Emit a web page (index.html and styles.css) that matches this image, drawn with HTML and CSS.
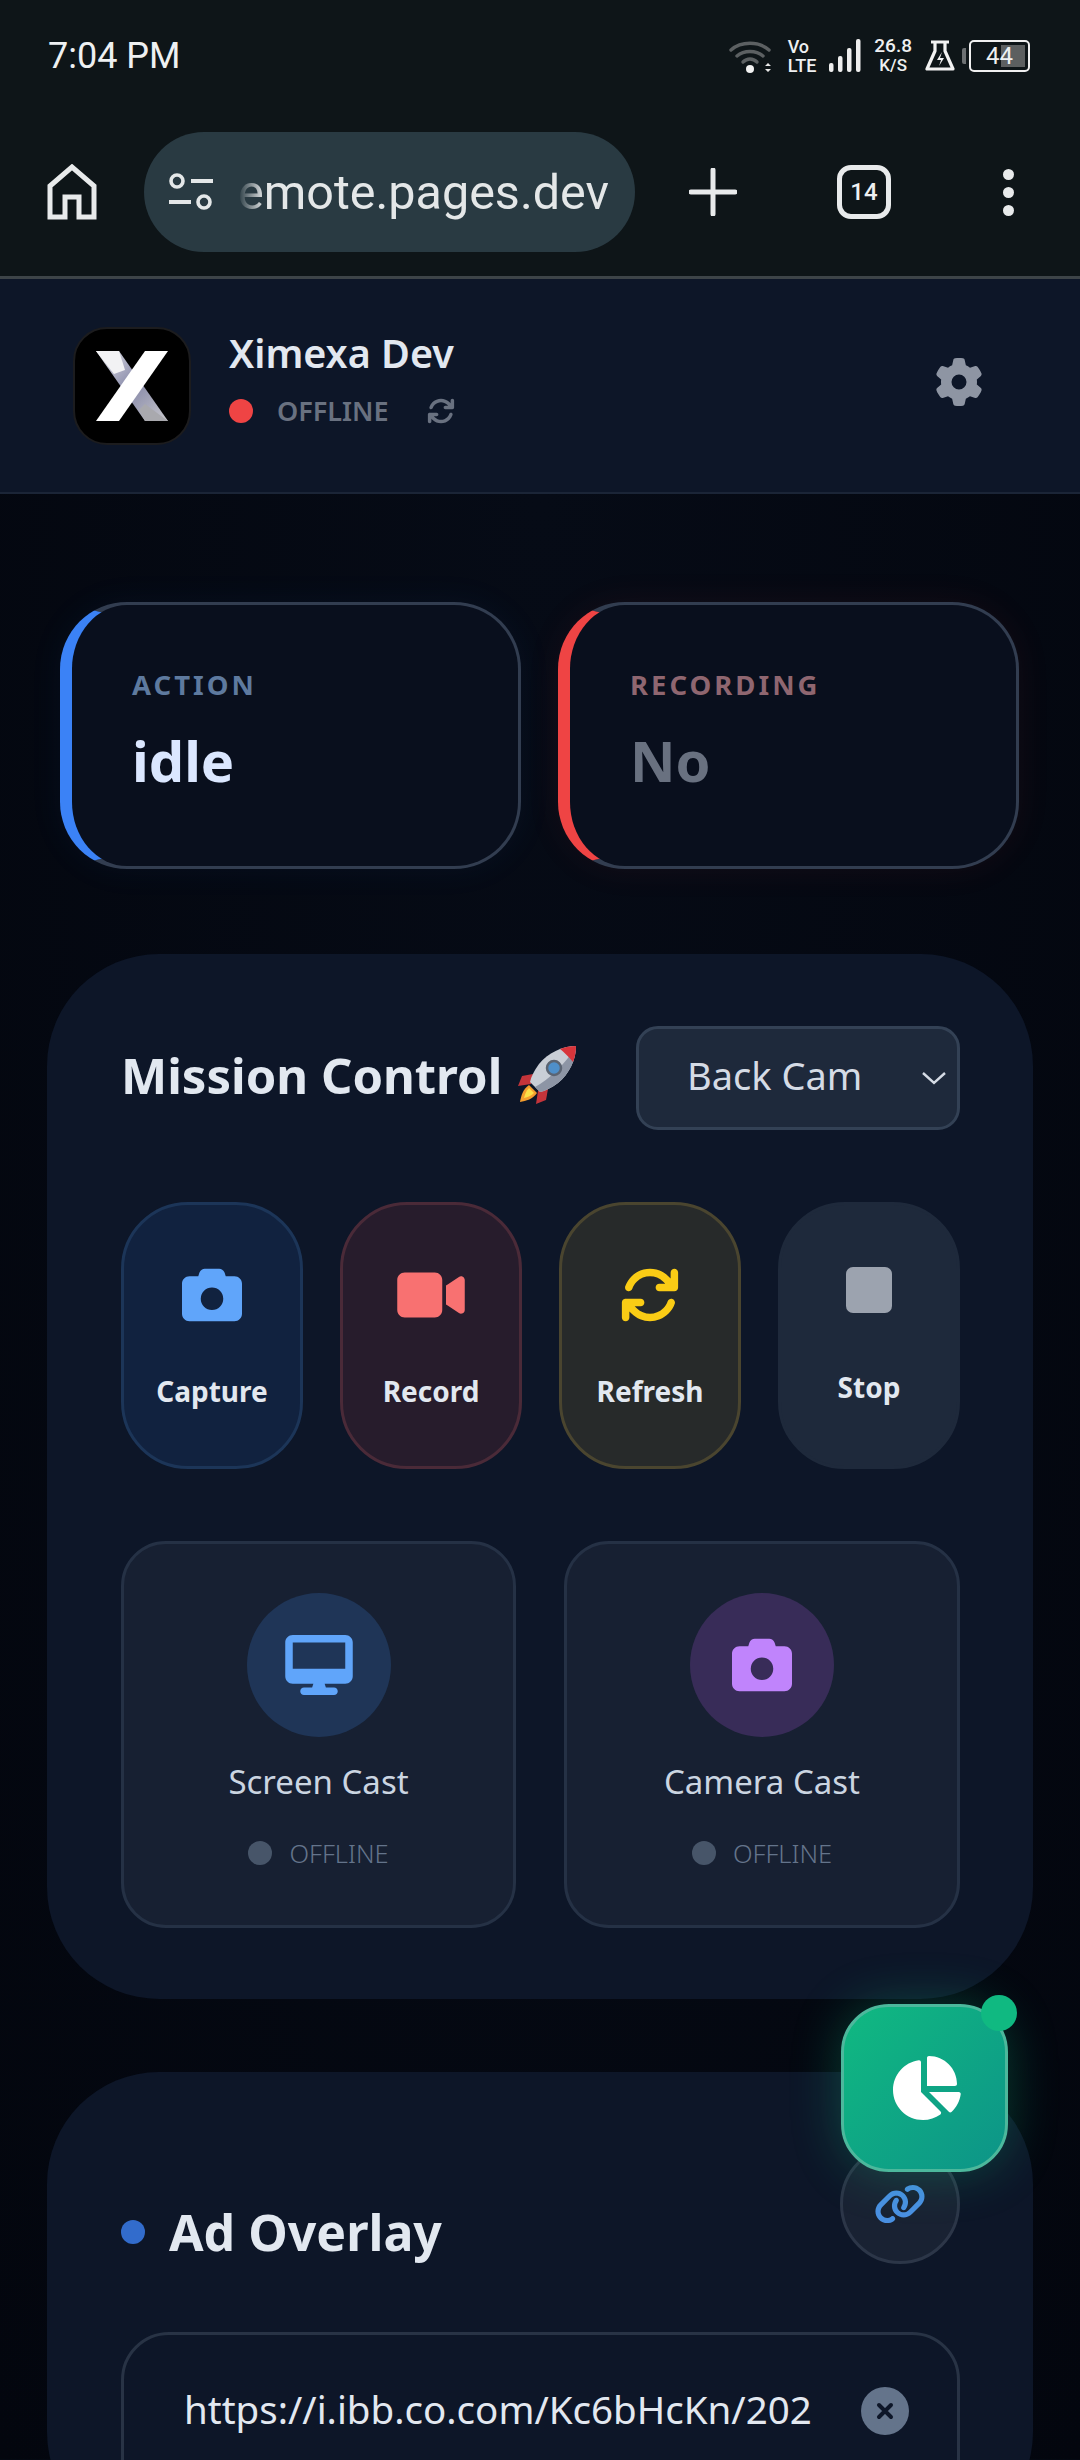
FILE: index.html
```html
<!DOCTYPE html>
<html lang="en">
<head>
    <meta charset="UTF-8">
    <meta name="viewport" content="width=device-width, initial-scale=1.0">
    <title>Ximexa Remote</title>
    <link rel="stylesheet" href="styles.css">
</head>
<body>

    <svg class="icon-defs" width="0" height="0">
        <symbol id="i-camera" viewBox="0 0 512 512"><path fill="currentColor" d="M149.1 64.8L138.7 96H64C28.7 96 0 124.7 0 160V416c0 35.3 28.7 64 64 64H448c35.3 0 64-28.7 64-64V160c0-35.3-28.7-64-64-64H373.3L362.9 64.8C356.4 45.2 338.1 32 317.4 32H194.6c-20.7 0-39 13.2-45.5 32.8zM256 192a96 96 0 1 1 0 192 96 96 0 1 1 0-192z"/></symbol>
        <symbol id="i-sync" viewBox="0 0 512 512"><path fill="currentColor" d="M105.1 202.6c7.7-21.8 20.2-42.3 37.8-59.8c62.5-62.5 163.8-62.5 226.3 0L386.3 160H336c-17.7 0-32 14.3-32 32s14.3 32 32 32H463.5c0 0 0 0 0 0h.4c17.7 0 32-14.3 32-32V64c0-17.7-14.3-32-32-32s-32 14.3-32 32v51.2L414.4 97.6c-87.5-87.5-229.3-87.5-316.8 0C73.2 122 55.6 150.7 44.8 181.4c-5.9 16.7 2.9 34.9 19.5 40.8s34.9-2.9 40.8-19.5zM39 289.3c-5 1.5-9.8 4.2-13.7 8.2c-4 4-6.7 8.8-8.1 14c-.3 1.2-.6 2.5-.8 3.8c-.3 1.7-.4 3.4-.4 5.1V448c0 17.7 14.3 32 32 32s32-14.3 32-32V396.9l17.6 17.5 0 0c87.5 87.4 229.3 87.4 316.7 0c24.4-24.4 42.1-53.1 52.9-83.7c5.9-16.7-2.9-34.9-19.5-40.8s-34.9 2.9-40.8 19.5c-7.7 21.8-20.2 42.3-37.8 59.8c-62.5 62.5-163.8 62.5-226.3 0l-.1-.1L125.6 352H176c17.7 0 32-14.3 32-32s-14.3-32-32-32H48.4c-1.6 0-3.2 .1-4.8 .3s-3.1 .5-4.6 1z"/></symbol>
    </svg>

    <div class="chrome">
        <div class="status-bar">
            <span class="clock">7:04 PM</span>
            <div class="status-icons">
                <svg class="wifi" width="46" height="36" viewBox="0 0 46 36">
                    <g fill="none" stroke="#5c6062" stroke-width="3.4" stroke-linecap="round">
                        <path d="M2 12C12 3 30 3 40 12"/>
                        <path d="M8 18C15 12 27 12 34 18"/>
                        <path d="M14 24C18 20 24 20 28 24"/>
                    </g>
                    <circle cx="21" cy="31" r="4" fill="#f2f2f2"/>
                    <path d="M36 28l3-3 3 3zM36 31l3 3 3-3z" fill="#e8e8e8"/>
                </svg>
                <span class="net-type">Vo<br>LTE</span>
                <svg class="signal" width="32" height="33" viewBox="0 0 32 33">
                    <g fill="#eeeeee">
                        <rect x="0" y="24" width="4.5" height="9" rx="2"/>
                        <rect x="9" y="17" width="4.5" height="16" rx="2"/>
                        <rect x="18" y="9" width="4.5" height="24" rx="2"/>
                        <rect x="27" y="0" width="4.5" height="33" rx="2"/>
                    </g>
                </svg>
                <span class="net-speed">26.8<br><small>K/S</small></span>
                <svg class="flask" width="30" height="31" viewBox="0 0 30 31">
                    <path d="M6 2H24M10 2V11L2 29H28L20 11V2" fill="none" stroke="#f2f2f2" stroke-width="3.2" stroke-linejoin="round"/>
                    <path d="M17 12l-5 8h4l-2 6 5-8h-4z" fill="#f2f2f2"/>
                </svg>
                <div class="battery">
                    <span class="battery-cap"></span>
                    <div class="battery-body">
                        <span class="battery-fill"></span>
                        <span class="battery-num">44</span>
                    </div>
                </div>
            </div>
        </div>
        <div class="toolbar">
            <svg class="home" width="50" height="56" viewBox="0 0 50 56">
                <path d="M3 53V22L25 3L47 22V53H32V33H18V53Z" fill="none" stroke="#e8eaeb" stroke-width="5"/>
            </svg>
            <div class="address-pill">
                <svg width="46" height="38" viewBox="0 0 46 38">
                    <g fill="none" stroke="#e4e7e8" stroke-width="3.6">
                        <circle cx="9" cy="8" r="6"/>
                        <circle cx="36" cy="29" r="6"/>
                    </g>
                    <path d="M23 8H45M1 29H23" stroke="#e4e7e8" stroke-width="4"/>
                </svg>
                <div class="url-clip"><span class="url">emote.pages.dev</span></div>
            </div>
            <svg class="plus" width="48" height="48" viewBox="0 0 48 48">
                <path d="M24 2V46M2 24H46" stroke="#e8eaeb" stroke-width="5" stroke-linecap="round"/>
            </svg>
            <div class="tab-count">14</div>
            <div class="menu-dots"><i></i><i></i><i></i></div>
        </div>
    </div>

    <header class="app-header">
        <div class="logo">
            <svg width="74" height="72" viewBox="0 0 74 72">
                <defs>
                    <linearGradient id="x-back" x1="0" y1="0" x2="1" y2="1">
                        <stop offset="0" stop-color="#e6e6ea"/>
                        <stop offset="0.5" stop-color="#8688a8"/>
                        <stop offset="1" stop-color="#c8c8cc"/>
                    </linearGradient>
                </defs>
                <path d="M1 1H24L73 71H50Z" fill="url(#x-back)"/>
                <path d="M1 1H24L30 20L19 24Z" fill="#f2f2f4"/>
                <path d="M50 71H73L50 54L44 60Z" fill="#a9a9ae"/>
                <path d="M50 1H73L24 71H1Z" fill="#ffffff"/>
            </svg>
        </div>
        <div class="brand">
            <div class="brand-name">Ximexa Dev</div>
            <div class="brand-status">
                <span class="status-dot"></span>
                <span class="status-text">OFFLINE</span>
                <svg class="status-sync" width="28" height="28"><use href="#i-sync"/></svg>
            </div>
        </div>
        <svg class="gear" width="48" height="48" viewBox="0 0 512 512">
            <path fill="#8e95a3" d="M495.9 166.6c3.2 8.7 .5 18.4-6.4 24.6l-43.3 39.4c1.1 8.3 1.7 16.8 1.7 25.4s-.6 17.1-1.7 25.4l43.3 39.4c6.9 6.2 9.6 15.9 6.4 24.6c-4.4 11.9-9.7 23.3-15.8 34.3l-4.7 8.1c-6.6 11-14 21.4-22.1 31.2c-5.9 7.2-15.7 9.6-24.5 6.8l-55.7-17.7c-13.4 10.3-28.2 18.9-44 25.4l-12.5 57.1c-2 9.1-9 16.3-18.2 17.8c-13.8 2.3-28 3.5-42.5 3.5s-28.7-1.2-42.5-3.5c-9.2-1.5-16.2-8.7-18.2-17.8l-12.5-57.1c-15.8-6.5-30.6-15.1-44-25.4L83.1 425.9c-8.8 2.8-18.6 .3-24.5-6.8c-8.1-9.8-15.5-20.2-22.1-31.2l-4.7-8.1c-6.1-11-11.4-22.4-15.8-34.3c-3.2-8.7-.5-18.4 6.4-24.6l43.3-39.4C64.6 273.1 64 264.6 64 256s.6-17.1 1.7-25.4L22.4 191.2c-6.9-6.2-9.6-15.9-6.4-24.6c4.4-11.9 9.7-23.3 15.8-34.3l4.7-8.1c6.6-11 14-21.4 22.1-31.2c5.9-7.2 15.7-9.6 24.5-6.8l55.7 17.7c13.4-10.3 28.2-18.9 44-25.4l12.5-57.1c2-9.1 9-16.3 18.2-17.8C227.3 1.2 241.5 0 256 0s28.7 1.2 42.5 3.5c9.2 1.5 16.2 8.7 18.2 17.8l12.5 57.1c15.8 6.5 30.6 15.1 44 25.4l55.7-17.7c8.8-2.8 18.6-.3 24.5 6.8c8.1 9.8 15.5 20.2 22.1 31.2l4.7 8.1c6.1 11 11.4 22.4 15.8 34.3zM256 336a80 80 0 1 0 0-160 80 80 0 1 0 0 160z"/>
        </svg>
    </header>

    <main class="content">
        <section class="stats">
            <div class="stat-card stat-blue">
                <div class="stat-label">ACTION</div>
                <div class="stat-value">idle</div>
            </div>
            <div class="stat-card stat-red">
                <div class="stat-label">RECORDING</div>
                <div class="stat-value">No</div>
            </div>
        </section>

        <section class="panel mission">
            <div class="mission-head">
                <h2 class="panel-title">Mission Control
                    <svg class="rocket" width="62" height="62" viewBox="0 0 62 62">
                        <path d="M17 30L6 32L2 42L15 40Z" fill="#c4343a"/>
                        <path d="M32 45L30 56L20 60L22 47Z" fill="#c4343a"/>
                        <path d="M13 41C7 45 5 52 4 58C10 57 17 55 21 49Z" fill="#f59e2e"/>
                        <path d="M13 44C10 47 9 50 8 54C12 53 15 52 18 49Z" fill="#fde047"/>
                        <path d="M60 2C46 2 32 9 23 20C18 27 15 33 14 38L24 48C29 47 35 44 42 39C53 30 60 16 60 2Z" fill="#c9ced6"/>
                        <path d="M60 2C60 16 53 30 42 39C35 44 29 47 24 48L19 43C32 36 50 20 60 2Z" fill="#8d95a5"/>
                        <path d="M60 2C54 2 49 3 44 5C48 8 54 14 57 18C59 13 60 8 60 2Z" fill="#d8353b"/>
                        <circle cx="38" cy="24" r="7" fill="#4f8fc9" stroke="#5b6472" stroke-width="2.5"/>
                    </svg>
                </h2>
                <div class="cam-select">
                    <span>Back Cam</span>
                    <svg width="26" height="14" viewBox="0 0 26 14"><path d="M2 2L13 12L24 2" fill="none" stroke="#d5dbe5" stroke-width="2.4"/></svg>
                </div>
            </div>

            <div class="actions">
                <button class="action-btn act-blue">
                    <svg class="act-icon icon-capture"><use href="#i-camera"/></svg>
                    <span>Capture</span>
                </button>
                <button class="action-btn act-red">
                    <svg class="act-icon" viewBox="0 0 576 512"><path fill="currentColor" d="M0 128C0 92.7 28.7 64 64 64H320c35.3 0 64 28.7 64 64V384c0 35.3-28.7 64-64 64H64c-35.3 0-64-28.7-64-64V128zM559.1 99.8c10.4 5.6 16.9 16.4 16.9 28.2V384c0 11.8-6.5 22.6-16.9 28.2s-23 5-32.9-1.6l-96-64L416 337.1V320 192 174.9l14.2-9.5 96-64c9.8-6.5 22.4-7.2 32.9-1.6z"/></svg>
                    <span>Record</span>
                </button>
                <button class="action-btn act-yellow">
                    <svg class="act-icon"><use href="#i-sync"/></svg>
                    <span>Refresh</span>
                </button>
                <button class="action-btn act-gray">
                    <span class="stop-square"></span>
                    <span>Stop</span>
                </button>
            </div>

            <div class="casts">
                <div class="cast-card">
                    <div class="cast-circle circle-blue">
                        <svg width="68" height="60" viewBox="0 0 576 512"><path fill="currentColor" d="M64 0C28.7 0 0 28.7 0 64V352c0 35.3 28.7 64 64 64H240l-10.7 32H160c-17.7 0-32 14.3-32 32s14.3 32 32 32H416c17.7 0 32-14.3 32-32s-14.3-32-32-32H346.7L336 416H512c35.3 0 64-28.7 64-64V64c0-35.3-28.7-64-64-64H64zM512 64V288H64V64H512z"/></svg>
                    </div>
                    <div class="cast-name">Screen Cast</div>
                    <div class="cast-status"><i></i>OFFLINE</div>
                </div>
                <div class="cast-card">
                    <div class="cast-circle circle-purple">
                        <svg width="60" height="60"><use href="#i-camera"/></svg>
                    </div>
                    <div class="cast-name">Camera Cast</div>
                    <div class="cast-status"><i></i>OFFLINE</div>
                </div>
            </div>
        </section>

        <section class="panel overlay">
            <div class="overlay-head">
                <h2 class="panel-title overlay-title"><span class="title-dot"></span>Ad Overlay</h2>
                <button class="link-btn">
                    <svg width="52" height="42" viewBox="0 0 640 512"><path fill="#4a90e2" d="M579.8 267.7c56.5-56.5 56.5-148 0-204.5c-50-50-128.8-56.5-186.3-15.4l-1.6 1.1c-14.4 10.3-17.7 30.3-7.4 44.6s30.3 17.7 44.6 7.4l1.6-1.1c32.1-22.9 76-19.3 103.8 8.6c31.5 31.5 31.5 82.5 0 114L422.3 334.8c-31.5 31.5-82.5 31.5-114 0c-27.9-27.9-31.5-71.8-8.6-103.8l1.1-1.6c10.3-14.4 6.9-34.4-7.4-44.6s-34.4-6.9-44.6 7.4l-1.1 1.6C206.5 251.2 213 330 263 380c56.5 56.5 148 56.5 204.5 0L579.8 267.7zM60.2 244.3c-56.5 56.5-56.5 148 0 204.5c50 50 128.8 56.5 186.3 15.4l1.6-1.1c14.4-10.3 17.7-30.3 7.4-44.6s-30.3-17.7-44.6-7.4l-1.6 1.1c-32.1 22.9-76 19.3-103.8-8.6C74 372 74 321 105.5 289.5L217.7 177.2c31.5-31.5 82.5-31.5 114 0c27.9 27.9 31.5 71.8 8.6 103.9l-1.1 1.6c-10.3 14.4-6.9 34.4 7.4 44.6s34.4 6.9 44.6-7.4l1.1-1.6C433.5 260.8 427 182 377 132c-56.5-56.5-148-56.5-204.5 0L60.2 244.3z"/></svg>
                </button>
            </div>
            <div class="url-input">
                <span class="url-text">https://i.ibb.co.com/Kc6bHcKn/202</span>
                <span class="clear-btn">
                    <svg width="20" height="20" viewBox="0 0 20 20"><path d="M4 4L16 16M16 4L4 16" stroke="#0d1628" stroke-width="4" stroke-linecap="round"/></svg>
                </span>
            </div>
        </section>
    </main>

    <button class="fab">
        <span class="fab-dot"></span>
        <svg width="72" height="64" viewBox="0 0 576 512"><path fill="#ffffff" d="M304 240V16.6c0-9 7-16.6 16-16.6C443.7 0 544 100.3 544 224c0 9-7.6 16-16.6 16H304zM32 272C32 150.7 122.1 50.3 239 34.3c9.2-1.3 17 6.1 17 15.4V288L412.5 444.5c6.7 6.7 6.2 17.7-1.5 23.1C371.8 495.6 323.8 512 272 512C139.5 512 32 404.6 32 272zm526.4 16c9.3 0 16.6 7.8 15.4 17c-7.7 55.9-34.6 105.6-73.9 142.3c-6 5.6-15.4 5.2-21.2-.7L320 288H558.4z"/></svg>
    </button>

</body>
</html>
```

FILE: styles.css
```css
/* --- Page --- */
html, body {
    margin: 0;
    height: 2460px;
    overflow: hidden;
}

body {
    position: relative;
    background-color: #040912;
    font-family: "Noto Sans", sans-serif;
    color: #e2e8f0;
}

.icon-defs {
    position: absolute;
}

/* --- Browser chrome --- */
.chrome {
    height: 276px;
    background-color: #0e1518;
    border-bottom: 3px solid #3d4448;
    font-family: Roboto, sans-serif;
    color: #eef0f1;
}

.status-bar {
    height: 108px;
    padding: 3px 50px 0 48px;
    box-sizing: border-box;
    display: flex;
    justify-content: space-between;
    align-items: center;
}

.clock {
    font-size: 36px;
}

.status-icons {
    display: flex;
    align-items: center;
    gap: 13px;
}

.net-type {
    font-size: 18px;
    line-height: 19px;
    font-weight: 500;
}

.net-speed {
    font-size: 19px;
    line-height: 19px;
    font-weight: 500;
    text-align: center;
}

.net-speed small {
    font-size: 17px;
}

.battery {
    display: flex;
    align-items: center;
    gap: 3px;
    margin-left: -6px;
}

.battery-cap {
    width: 4px;
    height: 16px;
    background-color: #6d7173;
    border-radius: 2px 0 0 2px;
}

.battery-body {
    position: relative;
    width: 57px;
    height: 28px;
    border: 2px solid #f0f0f0;
    border-radius: 5px;
    text-align: center;
    font-size: 24px;
    line-height: 28px;
}

.battery-fill {
    position: absolute;
    top: 3px;
    right: 3px;
    bottom: 3px;
    width: 24px;
    background-color: #5c5f60;
}

.battery-num {
    position: relative;
}

.toolbar {
    height: 168px;
    box-sizing: border-box;
    padding: 24px 0 24px 47px;
    display: flex;
    align-items: center;
}

.address-pill {
    width: 491px;
    height: 120px;
    margin-left: 47px;
    box-sizing: border-box;
    padding: 0 24px 0 24px;
    border-radius: 60px;
    background-color: #293a42;
    display: flex;
    align-items: center;
    gap: 24px;
    flex: none;
}

.url-clip {
    flex: 1;
    overflow: hidden;
    white-space: nowrap;
    -webkit-mask-image: linear-gradient(to right, transparent 0, #000 26px);
    mask-image: linear-gradient(to right, transparent 0, #000 26px);
}

.url {
    font-size: 48.5px;
    color: #e4e7e8;
}

.plus {
    margin-left: 54px;
    flex: none;
}

.tab-count {
    width: 44px;
    height: 44px;
    margin-left: 100px;
    flex: none;
    border: 5px solid #e8eaeb;
    border-radius: 14px;
    text-align: center;
    font-size: 24px;
    font-weight: 500;
    line-height: 44px;
}

.menu-dots {
    margin-left: 112px;
    display: flex;
    flex-direction: column;
    gap: 7px;
}

.menu-dots i {
    display: block;
    width: 11px;
    height: 11px;
    border-radius: 50%;
    background-color: #e8eaeb;
}

/* --- App header --- */
.app-header {
    height: 215px;
    box-sizing: border-box;
    padding: 0 97px 0 73px;
    background-color: #0d1628;
    border-bottom: 2px solid #1b2537;
    display: flex;
    align-items: center;
}

.logo {
    width: 118px;
    height: 118px;
    box-sizing: border-box;
    border: 2px solid #1c1c1e;
    border-radius: 34px;
    background-color: #000;
    display: flex;
    justify-content: center;
    align-items: center;
}

.brand {
    margin-left: 38px;
    margin-bottom: 12px;
    flex: 1;
}

.brand-name {
    font-size: 39.5px;
    font-weight: 600;
    line-height: 46px;
    color: #e2e8f0;
}

.brand-status {
    display: flex;
    align-items: center;
    margin-top: 16px;
}

.status-dot {
    width: 24px;
    height: 24px;
    border-radius: 50%;
    background-color: #ef4444;
}

.status-text {
    margin-left: 24px;
    font-size: 27px;
    font-weight: 600;
    color: #697180;
}

.status-sync {
    margin-left: 38px;
    color: #697180;
}

.gear {
    margin-bottom: 8px;
}

/* --- Content --- */
.content {
    padding: 108px 47px 0 47px;
    background: radial-gradient(ellipse at 50% 0, #060b16 0, #03060e 100%);
    height: 1965px;
    box-sizing: border-box;
}

.stats {
    margin: 0 13px;
    display: grid;
    grid-template-columns: 461px 461px;
    gap: 37px;
}

.stat-card {
    height: 267px;
    box-sizing: border-box;
    padding: 62px 60px 0 60px;
    border: 3px solid #323d50;
    border-left-width: 12px;
    border-radius: 67px;
    background-color: #090f1d;
}

.stat-blue {
    border-left-color: #3b82f6;
    box-shadow: 0 0 36px rgba(59, 130, 246, 0.06);
}

.stat-red {
    border-left-color: #ef4444;
    box-shadow: 0 0 36px rgba(239, 68, 68, 0.07);
}

.stat-label {
    font-size: 27.5px;
    font-weight: 700;
    letter-spacing: 3px;
    line-height: 36px;
}

.stat-blue .stat-label {
    color: #5e7a9f;
}

.stat-red .stat-label {
    color: #8f6670;
}

.stat-value {
    margin-top: 22px;
    font-size: 56px;
    font-weight: 700;
    line-height: 70px;
}

.stat-blue .stat-value {
    color: #dbe7ff;
}

.stat-red .stat-value {
    color: #697180;
}

.panel {
    padding: 72px 73px 0 74px;
    border-radius: 112px;
    background-color: #0d1628;
}

.mission {
    height: 1045px;
    margin-top: 85px;
    box-sizing: border-box;
}

.mission-head {
    display: flex;
    justify-content: space-between;
    align-items: center;
}

.panel-title {
    margin: 0 0 6px 0;
    display: flex;
    align-items: center;
    font-size: 49px;
    font-weight: 700;
    color: #e2e8f0;
}

.rocket {
    margin-left: 14px;
}

.cam-select {
    width: 324px;
    height: 104px;
    box-sizing: border-box;
    padding: 0 10px 0 48px;
    border: 3px solid #334155;
    border-radius: 22px;
    background-color: #1e293b;
    display: flex;
    justify-content: space-between;
    align-items: center;
    font-size: 38px;
    color: #d5dbe5;
}

.cam-select span {
    margin-bottom: 6px;
}

.actions {
    margin-top: 72px;
    display: grid;
    grid-template-columns: repeat(4, 182px);
    justify-content: space-between;
}

.action-btn {
    height: 267px;
    padding: 0;
    border: 3px solid transparent;
    border-radius: 67px;
    display: flex;
    flex-direction: column;
    align-items: center;
    font-family: inherit;
    font-size: 28px;
    font-weight: 700;
    color: #e2e8f0;
}

.act-icon {
    width: 60px;
    height: 60px;
    margin-top: 60px;
    margin-bottom: 47px;
}

.act-blue {
    background-color: #11223f;
    border-color: #1c3558;
}

.act-blue .act-icon {
    color: #60a5fa;
}

.act-red {
    background-color: #271c2c;
    border-color: #4a2a38;
}

.act-red .act-icon {
    width: 68px;
    color: #f87171;
}

.act-yellow {
    background-color: #272a2a;
    border-color: #4a452f;
}

.act-yellow .act-icon {
    color: #facc15;
}

.act-gray {
    background-color: #1e293b;
    border-color: #1e293b;
}

.stop-square {
    width: 46px;
    height: 46px;
    margin-top: 62px;
    margin-bottom: 55px;
    border-radius: 7px;
    background-color: #9ca3af;
}

.casts {
    margin-top: 72px;
    display: grid;
    grid-template-columns: 395px 396px;
    justify-content: space-between;
}

.cast-card {
    height: 387px;
    box-sizing: border-box;
    padding-top: 49px;
    border: 3px solid #253145;
    border-radius: 45px;
    background-color: #172032;
    display: flex;
    flex-direction: column;
    align-items: center;
}

.cast-circle {
    width: 144px;
    height: 144px;
    border-radius: 50%;
    display: flex;
    justify-content: center;
    align-items: center;
}

.circle-blue {
    background-color: #1f3557;
    color: #60a5fa;
}

.circle-purple {
    background-color: #382c58;
    color: #c084fc;
}

.cast-name {
    margin-top: 22px;
    font-size: 33px;
    line-height: 46px;
    color: #cbd5e1;
}

.cast-status {
    margin-top: 30px;
    display: flex;
    align-items: center;
    gap: 17px;
    font-size: 25.5px;
    font-weight: 300;
    line-height: 36px;
    color: #64748b;
}

.cast-status i {
    width: 24px;
    height: 24px;
    border-radius: 50%;
    background-color: #475569;
}

.overlay {
    margin-top: 73px;
    height: 400px;
}

.overlay-head {
    display: flex;
    justify-content: space-between;
    align-items: flex-start;
}

.overlay-title {
    margin-top: 54px;
    font-size: 50px;
    line-height: 68px;
}

.title-dot {
    width: 24px;
    height: 24px;
    margin-right: 24px;
    border-radius: 50%;
    background-color: #326ccc;
}

.link-btn {
    width: 120px;
    height: 120px;
    padding: 0;
    border: 3px solid #2c3648;
    border-radius: 50%;
    background-color: #192233;
    display: flex;
    justify-content: center;
    align-items: center;
}

.url-input {
    margin-top: 60px;
    height: 200px;
    box-sizing: border-box;
    padding: 48px 48px 0 60px;
    border: 3px solid #283345;
    border-radius: 48px;
    display: flex;
    justify-content: space-between;
    align-items: flex-start;
    font-size: 38.5px;
    color: #e2e8f0;
}

.clear-btn {
    width: 48px;
    height: 48px;
    margin-top: 4px;
    border-radius: 50%;
    background-color: #64748b;
    display: flex;
    justify-content: center;
    align-items: center;
}

/* --- Floating button over the panels --- */
.fab {
    position: absolute;
    left: 841px;
    top: 2004px;
    width: 167px;
    height: 168px;
    padding: 0;
    border: 3px solid #4cb89c;
    border-radius: 48px;
    background: linear-gradient(135deg, #10b981, #0d9488);
    box-shadow: 0 0 50px rgba(16, 185, 129, 0.3);
    display: flex;
    justify-content: center;
    align-items: center;
}

.fab-dot {
    position: absolute;
    right: -12px;
    top: -12px;
    width: 36px;
    height: 36px;
    border-radius: 50%;
    background-color: #10b981;
}
```
